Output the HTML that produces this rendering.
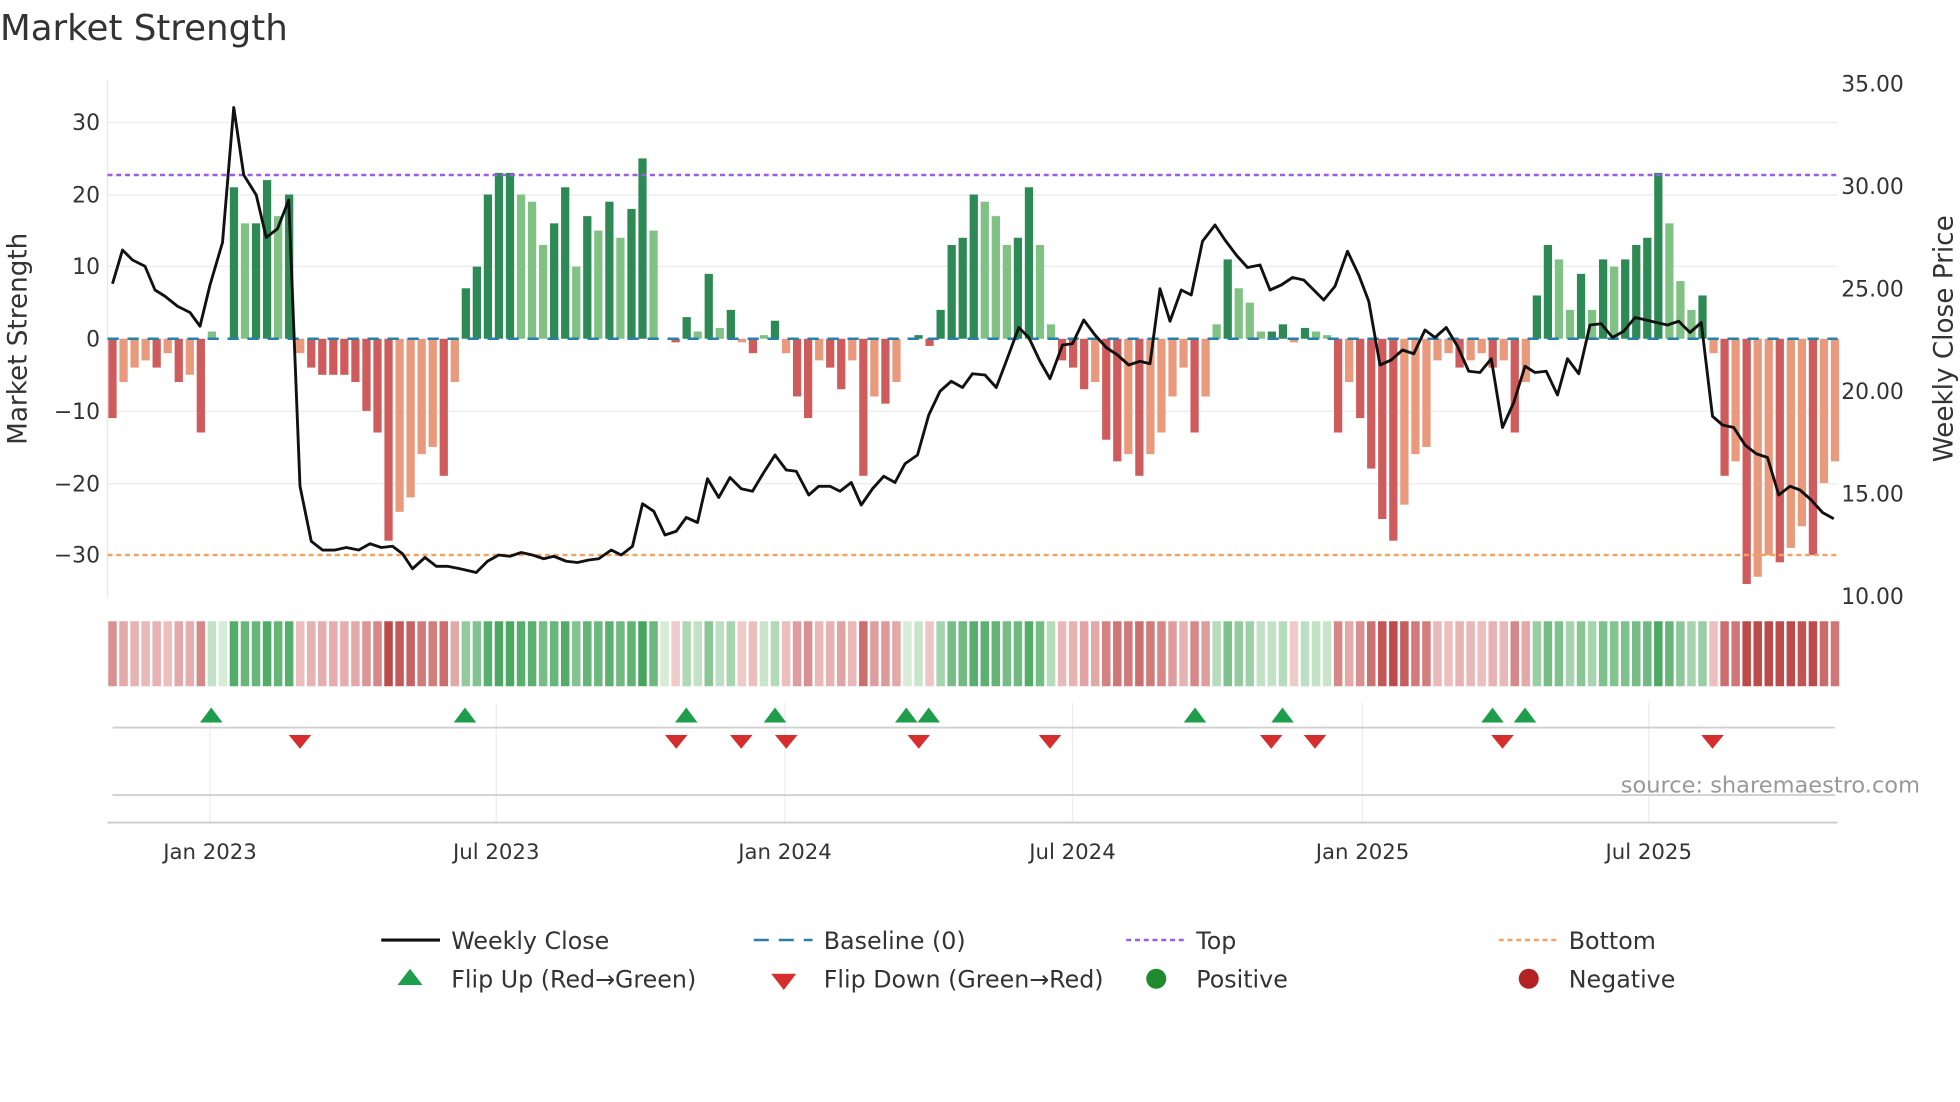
<!DOCTYPE html>
<html><head><meta charset="utf-8"><style>
html,body{margin:0;padding:0;background:#fff;}
svg{display:block;font-family:"DejaVu Sans","Liberation Sans",sans-serif;}
</style></head><body>
<svg id="s" width="1960" height="1102" viewBox="0 0 1568 881.6" xmlns="http://www.w3.org/2000/svg">
<rect width="1568" height="882" fill="#fff"/>
<text x="0" y="32" font-size="28.5" fill="#333">Market Strength</text>
<g id="grid" stroke="#ececec" stroke-width="1">
<line x1="86" y1="98" x2="1470" y2="98"/><line x1="86" y1="156" x2="1470" y2="156"/><line x1="86" y1="213" x2="1470" y2="213"/><line x1="86" y1="329" x2="1470" y2="329"/><line x1="86" y1="387" x2="1470" y2="387"/>
</g>
<line x1="86" y1="64" x2="86" y2="478" stroke="#e6e6e6"/>
<g font-size="17.5" fill="#333" text-anchor="end">
<text x="80" y="104">30</text><text x="80" y="162">20</text><text x="80" y="219">10</text><text x="80" y="277">0</text><text x="80" y="335">−10</text><text x="80" y="393">−20</text><text x="80" y="450">−30</text>
</g>
<g font-size="17.5" fill="#333">
<text x="1473" y="73">35.00</text><text x="1473" y="155">30.00</text><text x="1473" y="237">25.00</text><text x="1473" y="319">20.00</text><text x="1473" y="401">15.00</text><text x="1473" y="483">10.00</text>
</g>
<text transform="translate(21,271) rotate(-90)" font-size="21" fill="#333" text-anchor="middle">Market Strength</text>
<text transform="translate(1562,271) rotate(-90)" font-size="21" fill="#333" text-anchor="middle">Weekly Close Price</text>
<g id="bars"></g>
<line x1="86" y1="140" x2="1470" y2="140" stroke="#9b5de5" stroke-width="2" stroke-dasharray="4,3"/>
<line x1="86" y1="444" x2="1470" y2="444" stroke="#f4a261" stroke-width="2" stroke-dasharray="4,3"/>
<line x1="86" y1="271" x2="1470" y2="271" stroke="#2a7fa8" stroke-width="2" stroke-dasharray="9,7"/>
<polyline id="pl" fill="none" stroke="#111" stroke-width="2.3" stroke-linejoin="round"/>
<g id="heat"></g>
<g stroke="#ececec"><line x1="168" y1="562" x2="168" y2="658"/><line x1="397" y1="562" x2="397" y2="658"/><line x1="628" y1="562" x2="628" y2="658"/><line x1="858" y1="562" x2="858" y2="658"/><line x1="1090" y1="562" x2="1090" y2="658"/><line x1="1319" y1="562" x2="1319" y2="658"/></g>
<line x1="90" y1="582" x2="1468" y2="582" stroke="#d0d0d0" stroke-width="1.5"/>
<line x1="90" y1="636" x2="1468" y2="636" stroke="#d0d0d0" stroke-width="1.5"/>
<line x1="86" y1="658" x2="1470" y2="658" stroke="#ccc" stroke-width="1.5"/>
<g id="tri"></g>
<text x="1536" y="634" font-size="18" fill="#999" text-anchor="end">source: sharemaestro.com</text>
<g font-size="17" fill="#333" text-anchor="middle">
<text x="168" y="687">Jan 2023</text><text x="397" y="687">Jul 2023</text><text x="628" y="687">Jan 2024</text><text x="858" y="687">Jul 2024</text><text x="1090" y="687">Jan 2025</text><text x="1319" y="687">Jul 2025</text>
</g>
<g font-size="19" fill="#333">
<line x1="305" y1="752" x2="352" y2="752" stroke="#111" stroke-width="2.5"/><text x="361" y="759">Weekly Close</text>
<line x1="603" y1="752" x2="650" y2="752" stroke="#2a7fa8" stroke-width="2" stroke-dasharray="12,8"/><text x="659" y="759">Baseline (0)</text>
<line x1="901" y1="752" x2="948" y2="752" stroke="#9b5de5" stroke-width="2" stroke-dasharray="4,3"/><text x="957" y="759">Top</text>
<line x1="1199" y1="752" x2="1246" y2="752" stroke="#f4a261" stroke-width="2" stroke-dasharray="4,3"/><text x="1255" y="759">Bottom</text>
<polygon points="328,775 338,788 318,788" fill="#1e9e4a"/><text x="361" y="790">Flip Up (Red→Green)</text>
<polygon points="617,779 637,779 627,792" fill="#d62d2d"/><text x="659" y="790">Flip Down (Green→Red)</text>
<circle cx="925" cy="783" r="8" fill="#1f8a2e"/><text x="957" y="790">Positive</text>
<circle cx="1223" cy="783" r="8" fill="#b22222"/><text x="1255" y="790">Negative</text>
</g>
</svg>
<script>
var v=[-11,-6,-4,-3,-4,-2,-6,-5,-13,1,0,21,16,16,22,17,20,-2,-4,-5,-5,-5,-6,-10,-13,-28,-24,-22,-16,-15,-19,-6,7,10,20,23,23,20,19,13,16,21,10,17,15,19,14,18,25,15,0,-0.5,3,1,9,1.5,4,-0.5,-2,0.5,2.5,-2,-8,-11,-3,-4,-7,-3,-19,-8,-9,-6,0,0.5,-1,4,13,14,20,19,17,13,14,21,13,2,-3,-4,-7,-6,-14,-17,-16,-19,-16,-13,-8,-4,-13,-8,2,11,7,5,1,1,2,-0.5,1.5,1,0.5,-13,-6,-11,-18,-25,-28,-23,-16,-15,-3,-2,-4,-3,-2,-4,-3,-13,-6,6,13,11,4,9,4,11,10,11,13,14,23,16,8,4,6,-2,-19,-17,-34,-33,-30,-31,-29,-26,-30,-20,-17];
var NS="http://www.w3.org/2000/svg",N=v.length,st=1378/(N-1);
function el(t,a,p){var e=document.createElementNS(NS,t);for(var k in a)e.setAttribute(k,a[k]);document.getElementById(p).appendChild(e);}
function mix(a,b,t){var r=[];for(var i=0;i<3;i++)r.push(Math.round(a[i]+(b[i]-a[i])*t));return"rgb("+r+")";}
for(var i=0;i<N;i++){var x=90+i*st,val=v[i],pv=i?v[i-1]:0,dark=Math.abs(val)>=Math.abs(pv);
var c=val>=0?(dark?"#2e8a55":"#80c283"):(dark?"#cf5c5c":"#e99a7c");
var h=Math.abs(val)*5.77,y=val>=0?271-h:271;
if(h>0.3)el("rect",{x:x-3.3,y:y,width:6.6,height:h,fill:c},"bars");
var t=Math.min(Math.abs(val)/28,1);
var hc=val>=0?mix([214,236,214],[60,160,85],Math.pow(t,0.6)):mix([242,206,206],[190,75,75],Math.pow(t,0.8));
el("rect",{x:x-3.4,y:497,width:6.8,height:52,fill:hc},"heat");}
var p="90,227 98,200 106,208 116,213 124,232 132,237 142,245 152,250 160,261 168,228 178,194 187,86 195,140 205,156 213,190 222,183 231,160 240,389 249,433 258,440 268,440 277,438 287,440 296,435 305,438 314,437 322,443 330,455 340,446 349,453 358,453 368,455 381,458 390,449 399,444 408,445 417,442 426,444 435,447 443,445 453,449 462,450 471,448 479,447 489,440 497,444 506,437 514,403 523,409 532,428 541,425 549,414 558,418 566,383 575,398 584,382 593,391 602,393 611,378 620,364 629,376 637,377 647,396 655,389 664,389 672,393 681,386 689,404 698,391 707,381 716,386 724,371 734,364 743,332 752,313 761,305 770,310 778,299 788,300 797,310 805,289 815,262 823,270 832,289 840,303 850,276 858,275 867,256 876,268 885,278 894,284 903,292 912,289 920,291 928,231 936,257 945,232 953,236 962,193 972,180 980,192 989,204 998,214 1008,212 1016,232 1025,228 1034,222 1043,224 1051,232 1059,240 1068,229 1078,201 1087,220 1095,241 1104,292 1113,288 1122,280 1131,283 1140,264 1148,270 1157,262 1166,277 1175,297 1184,298 1193,287 1202,342 1211,322 1220,293 1228,298 1237,297 1246,316 1254,287 1263,299 1272,260 1281,259 1290,270 1299,265 1308,254 1317,256 1325,258 1334,260 1343,257 1352,266 1361,258 1370,333 1378,340 1387,342 1396,356 1405,363 1414,366 1423,396 1432,389 1440,392 1449,400 1458,410 1467,415";
document.getElementById("pl").setAttribute("points",p);
[169,372,549,620,725,743,956,1026,1194,1220].forEach(function(x){el("polygon",{points:(x)+",566 "+(x+9)+",578 "+(x-9)+",578",fill:"#1e9e4a"},"tri");});
[240,541,593,629,735,840,1017,1052,1202,1370].forEach(function(x){el("polygon",{points:(x-9)+",588 "+(x+9)+",588 "+x+",599",fill:"#d62d2d"},"tri");});
</script>
</body></html>
